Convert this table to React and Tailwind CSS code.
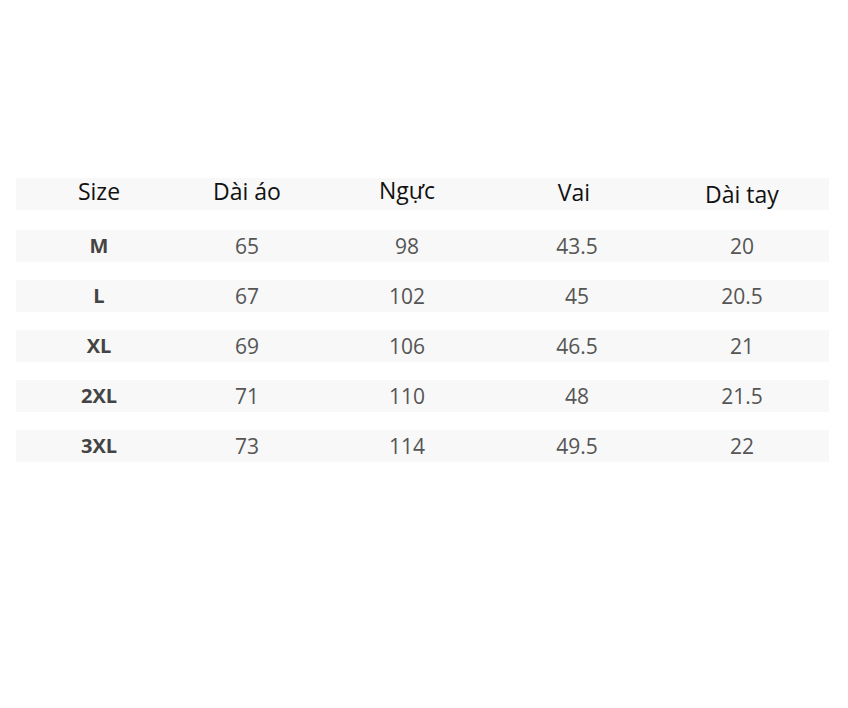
export default function App() {
  const rows = [
    ["M", "65", "98", "43.5", "20"],
    ["L", "67", "102", "45", "20.5"],
    ["XL", "69", "106", "46.5", "21"],
    ["2XL", "71", "110", "48", "21.5"],
    ["3XL", "73", "114", "49.5", "22"],
  ];
  const grid = "grid grid-cols-[166px_130px_190px_144px_183px] items-center text-center";
  return (
    <div
      className="w-[848px] h-[708px] bg-white pt-[178px] pl-[16px]"
      style={{ fontFamily: '"Open Sans", "Noto Sans", sans-serif' }}
    >
      <div className="w-[813px] flex flex-col">
        <div className={`${grid} h-[32px] bg-[#f8f8f8] text-[23px] text-[#111] leading-[32px]`}>
          <div className="mt-[-7px]">Size</div>
          <div className="mt-[-7px]">Dài áo</div>
          <div className="mt-[-9px]">Ngực</div>
          <div className="mt-[-5px]">Vai</div>
          <div className="pl-[9px] mt-[-1px]">Dài tay</div>
        </div>
        <div className="flex flex-col gap-[18px] mt-[20px]">
          {rows.map((r) => (
            <div key={r[0]} className={`${grid} h-[32px] bg-[#f8f8f8] leading-[32px]`}>
              <div className="text-[20px] font-bold text-[#444]">{r[0]}</div>
              <div className="text-[21px] text-[#555]">{r[1]}</div>
              <div className="text-[21px] text-[#555]">{r[2]}</div>
              <div className="text-[21px] text-[#555] pl-[6px]">{r[3]}</div>
              <div className="text-[21px] text-[#555] pl-[9px]">{r[4]}</div>
            </div>
          ))}
        </div>
      </div>
    </div>
  );
}
